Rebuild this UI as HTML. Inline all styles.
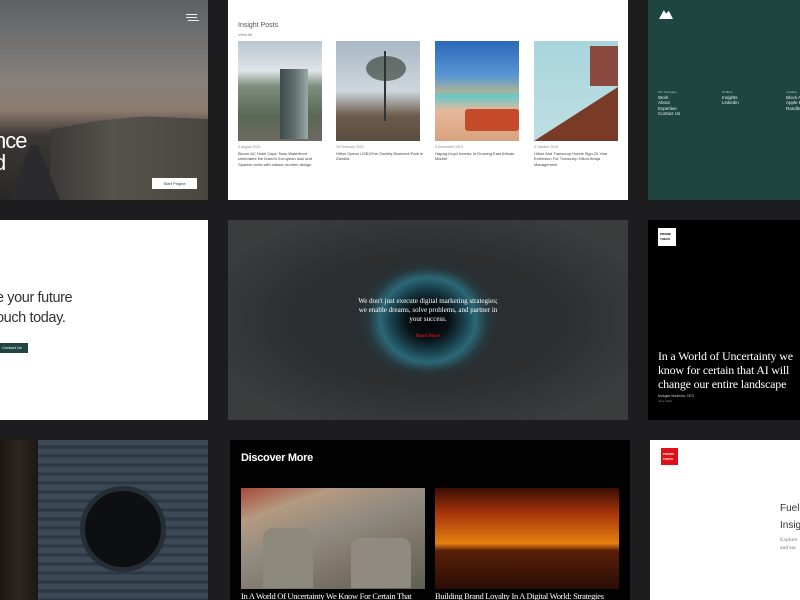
<!DOCTYPE html>
<html><head><meta charset="utf-8"><style>
*{margin:0;padding:0;box-sizing:border-box}
body{width:800px;height:600px;background:#1d1c1e;position:relative;overflow:hidden;font-family:"Liberation Sans",sans-serif}
.t{position:absolute;overflow:hidden}
.serif{font-family:"Liberation Serif",serif}
</style></head><body>

<!-- A city -->
<div class="t" style="left:0;top:0;width:208px;height:200px;background:linear-gradient(180deg,#5d6266 0%,#86807b 40%,#8e7b6e 55%,#3b3735 68%,#2a2826 100%)">
  <div style="position:absolute;left:50px;top:112px;width:158px;height:88px;background:linear-gradient(90deg,#3b3a37,#56524c 40%,#4a4640);clip-path:polygon(0 20%,30% 10%,60% 5%,100% 8%,100% 100%,0 100%)"></div>
  <div style="position:absolute;left:10px;top:145px;width:50px;height:55px;background:#2b2b2e;clip-path:polygon(40% 0,55% 0,100% 100%,0 100%)"></div>
  <div style="position:absolute;left:186px;top:14px;width:11px;height:1px;background:#eee;box-shadow:0 3px 0 #eee,2px 6px 0 #eee"></div>
  <div style="position:absolute;left:-6px;top:130px;color:#fff;font-size:22px;line-height:22px;letter-spacing:-1px">nce<br>d</div>
  <div style="position:absolute;left:152px;top:178px;width:45px;height:11px;background:#fff;font-size:4px;color:#333;text-align:center;line-height:11px">Start Project</div>
</div>

<!-- B insight -->
<div class="t" style="left:228px;top:0;width:400px;height:200px;background:#fff">
  <div style="position:absolute;left:10px;top:22px;font-size:7px;color:#555">Insight Posts</div>
  <div style="position:absolute;left:10px;top:32px;font-size:4px;color:#777">View All</div>
  <div style="position:absolute;left:10px;top:41px;width:84px;height:100px;background:linear-gradient(180deg,#b9c6d2 0%,#dfe4e8 30%,#7f8e7e 45%,#5a6856 75%,#6d6a62 100%)"><div style="position:absolute;left:42px;top:28px;width:28px;height:70px;background:linear-gradient(90deg,#3f4c4c,#5e6d6c,#9aa)"></div></div>
  <div style="position:absolute;left:108px;top:41px;width:84px;height:100px;background:linear-gradient(180deg,#a9b8c5 0%,#cfd7dd 50%,#6b5b4a 75%,#5a4b40 100%)"><div style="position:absolute;left:48px;top:10px;width:2px;height:70px;background:#333"></div><div style="position:absolute;left:30px;top:15px;width:40px;height:25px;background:#2a3328;border-radius:50%;opacity:.6"></div></div>
  <div style="position:absolute;left:207px;top:41px;width:84px;height:100px;background:linear-gradient(180deg,#2b68b8 0%,#5a97d4 35%,#a9b29b 50%,#68c8c8 55%,#e7b89a 70%,#d8a27f 100%)"><div style="position:absolute;left:30px;top:68px;width:54px;height:22px;background:#c44a2a;border-radius:3px"></div></div>
  <div style="position:absolute;left:306px;top:41px;width:84px;height:100px;background:linear-gradient(180deg,#a8d5dc,#bfdfe3)"><div style="position:absolute;left:0;top:40px;width:84px;height:60px;background:#7a3a28;clip-path:polygon(0 100%,100% 10%,100% 100%)"></div><div style="position:absolute;left:56px;top:5px;width:28px;height:40px;background:#8a4a40"></div></div>
  <div style="position:absolute;left:10px;top:145px;width:86px;font-size:3.5px;color:#888">3 August 2023</div>
  <div style="position:absolute;left:10px;top:151px;width:88px;font-size:4px;line-height:5.3px;color:#444">Bloom AC Hotel Cape Town Waterfront celebrates the brand's European soul and Spanish roots with classic modern design</div>
  <div style="position:absolute;left:108px;top:145px;font-size:3.5px;color:#888">19 February 2023</div>
  <div style="position:absolute;left:108px;top:151px;width:88px;font-size:4px;line-height:5.3px;color:#444">Hilton Opens US$100m Society Business Park In Zambia</div>
  <div style="position:absolute;left:207px;top:145px;font-size:3.5px;color:#888">5 December 2019</div>
  <div style="position:absolute;left:207px;top:151px;width:88px;font-size:4px;line-height:5.3px;color:#444">Hapag-Lloyd Invests In Growing East African Market</div>
  <div style="position:absolute;left:306px;top:145px;font-size:3.5px;color:#888">3 October 2019</div>
  <div style="position:absolute;left:306px;top:151px;width:88px;font-size:4px;line-height:5.3px;color:#444">Hilton And Transcorp Hotels Sign 20 Year Extension For Transcorp Hilton Abuja Management</div>
</div>

<!-- C green -->
<div class="t" style="left:648px;top:0;width:152px;height:200px;background:#1f4541">
  <div style="position:absolute;left:11px;top:10px;width:14px;height:9px;background:#fff;clip-path:polygon(0 100%,35% 0,50% 40%,70% 10%,100% 100%)"></div>
  <div style="position:absolute;left:10px;top:90px;font-size:3px;color:#bcc">Our Company</div>
  <div style="position:absolute;left:10px;top:95px;font-size:4.5px;line-height:5.3px;color:#e8eeee">Work<br>About<br>Expertise<br>Contact Us</div>
  <div style="position:absolute;left:74px;top:90px;font-size:3px;color:#bcc">Toolbox</div>
  <div style="position:absolute;left:74px;top:95px;font-size:4.5px;line-height:5.3px;color:#e8eeee">Insights<br>Linkedin</div>
  <div style="position:absolute;left:138px;top:90px;font-size:3px;color:#bcc">Location</div>
  <div style="position:absolute;left:138px;top:95px;font-size:4.5px;line-height:5.3px;color:#e8eeee;white-space:nowrap">Block A<br>Apple B<br>Randbu</div>
</div>

<!-- D white -->
<div class="t" style="left:0;top:220px;width:208px;height:200px;background:#fff">
  <div style="position:absolute;left:-4px;top:68px;font-size:14.5px;line-height:20px;color:#333;letter-spacing:-0.4px;white-space:nowrap">e your future<br>ouch today.</div>
  <div style="position:absolute;left:-4px;top:123px;width:32px;height:10px;background:#1f4541;font-size:4px;color:#fff;line-height:10px;text-align:center">Contact Us</div>
</div>

<!-- E eye -->
<div class="t" style="left:228px;top:220px;width:400px;height:200px;background:radial-gradient(ellipse 70px 62px at 200px 100px,#040507 0%,#081014 30%,#1c4855 55%,#2c6775 68%,#26383e 85%,#2a2e30 100%),#2c2f31">
  <div style="position:absolute;inset:0;background:radial-gradient(ellipse 230px 115px at 200px 100px,transparent 38%,#2c2e30 58%,#3c3d3e 100%);opacity:.9"></div>
  <div class="serif" style="position:absolute;left:128px;top:77px;width:144px;text-align:center;color:#fff;font-size:7px;line-height:9px">We don't just execute digital marketing strategies; we enable dreams, solve problems, and partner in your success.</div>
  <div class="serif" style="position:absolute;left:0;width:400px;top:114px;text-align:center;color:#d01010;font-size:5px;font-weight:bold">Read More</div>
</div>

<!-- F black -->
<div class="t" style="left:648px;top:220px;width:152px;height:200px;background:#000">
  <div style="position:absolute;left:10px;top:8px;width:18px;height:18px;background:#fff;font-size:3px;font-weight:bold;color:#000;padding:4px 2px;line-height:5px">PROME<br>THEUS</div>
  <div class="serif" style="position:absolute;left:10px;top:129px;width:150px;color:#fff;font-size:12px;line-height:14px;letter-spacing:-0.2px">In a World of Uncertainty we know for certain that AI will change our entire landscape</div>
  <div style="position:absolute;left:10px;top:174px;font-size:3.5px;color:#ccc">Mokgae Madisha, CEO</div>
  <div style="position:absolute;left:10px;top:179px;font-size:3px;color:#888">June 2024</div>
</div>

<!-- G wood -->
<div class="t" style="left:0;top:440px;width:208px;height:160px;background:repeating-linear-gradient(180deg,#3c4956 0,#3c4956 5px,#2b3540 6px,#34404b 9px)">
  <div style="position:absolute;left:0;top:0;width:38px;height:160px;background:linear-gradient(90deg,#1a1612,#2e2720,#1b1714)"></div>
  <div style="position:absolute;left:80px;top:46px;width:86px;height:86px;border-radius:50%;background:#0d0f12;border:5px solid #252d35"></div>
</div>

<!-- H discover -->
<div class="t" style="left:230px;top:440px;width:400px;height:160px;background:#030203">
  <div style="position:absolute;left:11px;top:12px;color:#fff;font-size:11px;font-weight:bold;letter-spacing:-0.3px">Discover More</div>
  <div style="position:absolute;left:11px;top:48px;width:184px;height:101px;background:linear-gradient(160deg,#a94a3c 0%,#b49a80 20%,#908a80 45%,#7d7468 70%,#5f5f52 100%)">
    <div style="position:absolute;left:22px;top:40px;width:50px;height:60px;background:#8d887c;border-radius:10px 10px 0 0"></div>
    <div style="position:absolute;left:110px;top:50px;width:60px;height:50px;background:#8f8b80;border-radius:10px 10px 0 0"></div>
  </div>
  <div style="position:absolute;left:205px;top:48px;width:184px;height:101px;background:linear-gradient(180deg,#3a0e04 0%,#a8350c 25%,#e4800f 55%,#5a2008 62%,#2a0d06 100%)"></div>
  <div class="serif" style="position:absolute;left:11px;top:151px;color:#fff;font-size:8.5px;white-space:nowrap;letter-spacing:-0.3px">In A World Of Uncertainty We Know For Certain That</div>
  <div class="serif" style="position:absolute;left:205px;top:151px;color:#fff;font-size:8.5px;white-space:nowrap;letter-spacing:-0.3px">Building Brand Loyalty In A Digital World: Strategies</div>
</div>

<!-- I white -->
<div class="t" style="left:650px;top:440px;width:150px;height:160px;background:#fff">
  <div style="position:absolute;left:11px;top:8px;width:17px;height:17px;background:#e10f17;font-size:3px;font-weight:bold;color:#fff;padding:4px 2px;line-height:5px">PROME<br>THEUS</div>
  <div style="position:absolute;left:130px;top:60px;font-size:10px;line-height:17px;color:#333;white-space:nowrap">Fuel<br>Insig</div>
  <div class="serif" style="position:absolute;left:130px;top:96px;font-size:5.5px;line-height:8px;color:#777;white-space:nowrap">Explore<br>and suc</div>
</div>

</body></html>
